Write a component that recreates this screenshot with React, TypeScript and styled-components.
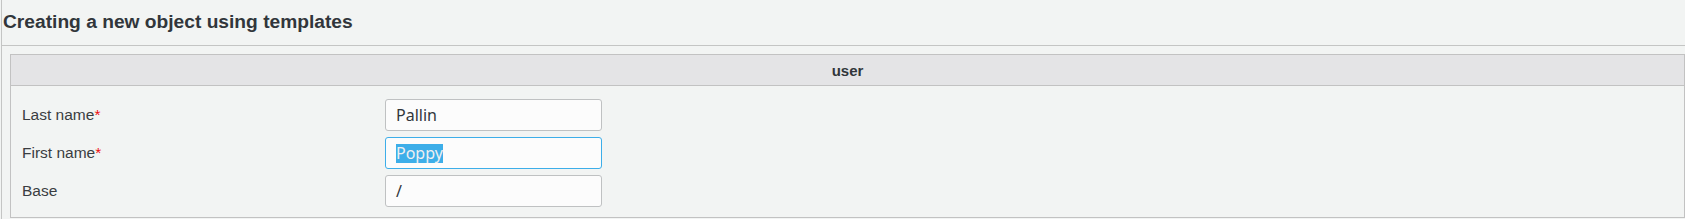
import React from 'react';
import styled, { createGlobalStyle } from 'styled-components';

const GlobalStyle = createGlobalStyle`
    html, body {
        margin: 0;
        padding: 0;
        background: #f2f4f3;
    }
`;

type Field = {
    label: string;
    value: string;
    required?: boolean;
    focused?: boolean;
};

const fields: Field[] = [
    { label: 'Last name', value: 'Pallin', required: true },
    { label: 'First name', value: 'Poppy', required: true, focused: true },
    { label: 'Base', value: '/' },
];

function App() {
    return (
        <>
            <GlobalStyle />
            <Page>
                <Title>Creating a new object using templates</Title>
                <Panel>
                    <PanelHeader>user</PanelHeader>
                    <FormGrid>
                        {fields.map((f) => (
                            <React.Fragment key={f.label}>
                                <Label>
                                    {f.label}
                                    {f.required && <Required>*</Required>}
                                </Label>
                                <InputBox $focused={!!f.focused}>
                                    {f.focused ? <Selection>{f.value}</Selection> : f.value}
                                </InputBox>
                            </React.Fragment>
                        ))}
                    </FormGrid>
                </Panel>
            </Page>
        </>
    );
}

export default App;

const Page = styled.div`
    margin-left: 1px;
    border-left: 1px solid #c4c5c4;
    min-height: 219px;
    box-sizing: border-box;
    color: #31363b;
`;

const Title = styled.h1`
    margin: 0;
    padding: 11px 0 12px 1px;
    font-family: 'Liberation Sans', Arial, sans-serif;
    font-weight: bold;
    font-size: 19.2px;
    line-height: 22px;
    color: #31363b;
    border-bottom: 1px solid #c4c5c4;
`;

const Panel = styled.div`
    margin: 8px 0 0 8px;
    border: 1px solid #c2c2c2;
`;

const PanelHeader = styled.div`
    height: 30px;
    display: flex;
    align-items: center;
    justify-content: center;
    background: #e4e4e6;
    border-bottom: 1px solid #c2c2c2;
    font-family: 'Liberation Sans', Arial, sans-serif;
    font-weight: bold;
    font-size: 15px;
    color: #31363b;
`;

const FormGrid = styled.div`
    display: grid;
    grid-template-columns: 363px 217px;
    grid-auto-rows: 32px;
    row-gap: 6px;
    padding: 13px 0 10px 11px;
`;

const Label = styled.div`
    display: flex;
    align-items: center;
    font-family: 'Liberation Sans', Arial, sans-serif;
    font-size: 15.5px;
    color: #3a3d41;
`;

const Required = styled.span`
    color: #ee1111;
`;

const InputBox = styled.div<{ $focused: boolean }>`
    box-sizing: border-box;
    display: flex;
    align-items: center;
    height: 32px;
    padding: 0 10px;
    background: #fcfcfc;
    border: 1px solid ${(p) => (p.$focused ? '#3daee9' : '#bfc1c2')};
    border-radius: 3px;
    font-family: 'Noto Sans', 'Open Sans', sans-serif;
    font-size: 16px;
    color: #31363b;
`;

const Selection = styled.span`
    background: #3daee9;
    color: #eff0f1;
    line-height: 19px;
`;
